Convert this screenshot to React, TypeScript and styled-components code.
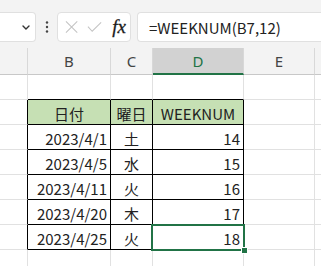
import React from "react";
import styled, { createGlobalStyle, css } from "styled-components";

const GRID = "#e1e1e1";
const INK = "#222";
const GREEN = "#217346";
const HEAD_GREEN = "#c6e0b4";
const CELL_FONT = `"Noto Sans CJK JP", "Noto Sans", sans-serif`;

type Row = { date: string; day: string; week: string };

const rows: Row[] = [
  { date: "2023/4/1", day: "土", week: "14" },
  { date: "2023/4/5", day: "水", week: "15" },
  { date: "2023/4/11", day: "火", week: "16" },
  { date: "2023/4/20", day: "木", week: "17" },
  { date: "2023/4/25", day: "火", week: "18" },
];

const columns = ["", "B", "C", "D", "E", ""];

const App: React.FC = () => {
  // sheet body: row 0 blank, row 1 header, rows 2-6 data, row 7 blank
  const body: string[][] = [
    ["", "", "", "", "", ""],
    ["", "日付", "曜日", "WEEKNUM", "", ""],
    ...rows.map((r) => ["", r.date, r.day, r.week, "", ""]),
    ["", "", "", "", "", ""],
  ];

  return (
    <Page>
      <GlobalStyle />
      <Toolbar>
        <NameBox>
          <svg width="8" height="5" viewBox="0 0 8 5" aria-hidden>
            <path d="M1 1l3 3 3-3" stroke="#333" strokeWidth="1.4" fill="none" strokeLinecap="round" />
          </svg>
        </NameBox>
        <Dots width="4" height="12" viewBox="0 0 4 12" aria-hidden>
          <circle cx="2" cy="1.5" r="1.2" fill="#444" />
          <circle cx="2" cy="6" r="1.2" fill="#444" />
          <circle cx="2" cy="10.5" r="1.2" fill="#444" />
        </Dots>
        <FxBox>
          <svg width="14" height="14" viewBox="0 0 14 14" aria-hidden>
            <path d="M1 1l12 12M13 1L1 13" stroke="#c4c4c4" strokeWidth="1.1" fill="none" />
          </svg>
          <svg width="16" height="12" viewBox="0 0 16 12" aria-hidden>
            <path d="M1 5.5l4.5 5L15 1" stroke="#c4c4c4" strokeWidth="1.1" fill="none" />
          </svg>
          <FxLabel>fx</FxLabel>
        </FxBox>
        <FormulaInput>=WEEKNUM(B7,12)</FormulaInput>
      </Toolbar>

      <Sheet>
        {columns.map((c, i) => (
          <ColHead key={`h${i}`} $selected={c === "D"}>
            {c}
          </ColHead>
        ))}
        {body.map((line, r) =>
          line.map((text, c) => {
            const inTable = r >= 1 && r <= 6 && c >= 1 && c <= 3;
            const aboveTable = r === 0 && c >= 1 && c <= 3;
            const leftOfTable = c === 0 && r >= 1 && r <= 6;
            const align = r === 1 || c === 2 ? "center" : "right";
            return (
              <Cell
                key={`${r}-${c}`}
                $align={align}
                $header={inTable && r === 1}
                $rightDark={inTable || leftOfTable}
                $bottomDark={inTable || aboveTable}
                $active={r === 6 && c === 3}
              >
                {text}
              </Cell>
            );
          })
        )}
      </Sheet>
    </Page>
  );
};

export default App;

/* ----- styles ----- */
const GlobalStyle = createGlobalStyle`
  html, body {
    margin: 0;
    background: #fff;
    overflow: hidden;
  }
`;

const Page = styled.div`
  width: 321px;
  height: 266px;
  overflow: hidden;
  font-family: ${CELL_FONT};
  color: ${INK};
`;

const Toolbar = styled.div`
  height: 48px;
  background: #f3f3f3;
  display: flex;
  align-items: center;
  padding-top: 6px;
  box-sizing: border-box;
`;

const Box = css`
  height: 30px;
  box-sizing: border-box;
  background: #fff;
  border: 1px solid #e0e0e0;
  border-radius: 4px;
  display: flex;
  align-items: center;
`;

const NameBox = styled.div`
  ${Box};
  width: 36px;
  border-left: none;
  border-radius: 0 4px 4px 0;
  justify-content: flex-end;
  padding-right: 5px;
`;

const Dots = styled.svg`
  margin: 0 8px 0 9px;
`;

const FxBox = styled.div`
  ${Box};
  width: 74px;
  padding: 0 4px 0 7px;
  gap: 9px;
`;

const FxLabel = styled.span`
  font-family: "Liberation Serif", serif;
  font-style: italic;
  font-size: 19px;
  color: #1a1a1a;
  margin-left: 1px;
  -webkit-text-stroke: 0.3px #1a1a1a;
`;

const FormulaInput = styled.div`
  ${Box};
  flex: 1;
  margin-left: 6px;
  border-right: none;
  border-radius: 4px 0 0 4px;
  padding-left: 11px;
  font-size: 15px;
  color: ${INK};
  white-space: nowrap;
`;

const Sheet = styled.div`
  display: grid;
  grid-template-columns: 28px 83px 42px 91px 71px 1fr;
  grid-template-rows: 27px;
  grid-auto-rows: 25px;
`;

const ColHead = styled.div<{ $selected?: boolean }>`
  box-sizing: border-box;
  background: ${({ $selected }) => ($selected ? "#d2d2d2" : "#f3f3f3")};
  border-right: 1px solid #d8d8d8;
  border-bottom: ${({ $selected }) => ($selected ? `2px solid ${GREEN}` : "1px solid #c8c8c8")};
  display: flex;
  align-items: center;
  justify-content: center;
  font-family: "Noto Sans", sans-serif;
  font-size: 15px;
  color: ${({ $selected }) => ($selected ? GREEN : "#444")};
`;

const Cell = styled.div<{
  $align: "center" | "right";
  $header?: boolean;
  $rightDark?: boolean;
  $bottomDark?: boolean;
  $active?: boolean;
}>`
  position: relative;
  box-sizing: border-box;
  display: flex;
  align-items: center;
  justify-content: ${({ $align }) => ($align === "center" ? "center" : "flex-end")};
  padding: 2px 3px 0 3px;
  font-size: 15px;
  white-space: nowrap;
  background: ${({ $header }) => ($header ? HEAD_GREEN : "#fff")};
  border-right: 1px solid ${({ $rightDark }) => ($rightDark ? "#000" : GRID)};
  border-bottom: 1px solid ${({ $bottomDark }) => ($bottomDark ? "#000" : GRID)};

  ${({ $active }) =>
    $active &&
    css`
      z-index: 1;
      &::before {
        content: "";
        position: absolute;
        inset: -1px -2px -2px -2px;
        border: 2px solid ${GREEN};
        pointer-events: none;
      }
      &::after {
        content: "";
        position: absolute;
        right: -5px;
        bottom: -5px;
        width: 5px;
        height: 5px;
        background: ${GREEN};
        border: 1px solid #fff;
      }
    `}
`;
